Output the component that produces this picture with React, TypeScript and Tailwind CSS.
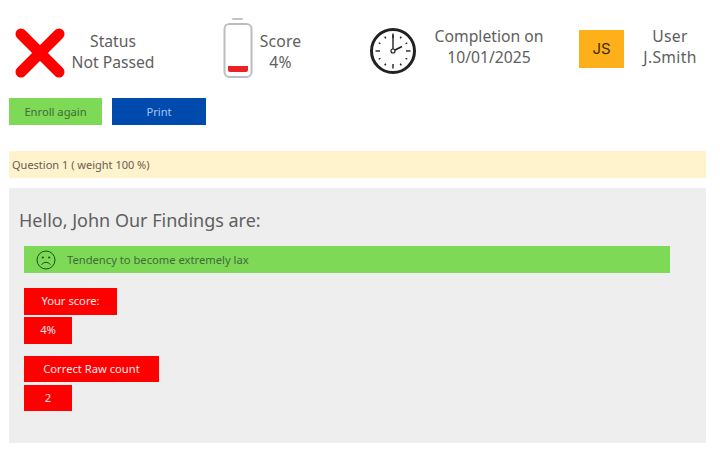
const font = { fontFamily: '"Noto Sans", sans-serif' };

function CrossIcon() {
  return (
    <svg width="50" height="50" viewBox="0 0 50 50" className="shrink-0">
      <path d="M6 6 L44 44 M44 6 L6 44" stroke="#ff0000" strokeWidth="11" strokeLinecap="round" />
    </svg>
  );
}

function BatteryIcon() {
  return (
    <svg width="30" height="60" viewBox="0 0 30 60" className="shrink-0">
      <path d="M10 1 H19" stroke="#c4c4c4" strokeWidth="2" strokeLinecap="round" />
      <rect x="1.5" y="6" width="27" height="53" rx="5" fill="#fff" stroke="#bdbdbd" strokeWidth="2" />
      <path d="M5 48 H25 V52 Q25 54 23 54 H7 Q5 54 5 52 Z" fill="#ed2024" />
    </svg>
  );
}

function ClockIcon() {
  const ticks = Array.from({ length: 12 }, (_, i) => i * 30);
  return (
    <svg width="48" height="48" viewBox="0 0 48 48" className="shrink-0">
      <circle cx="24" cy="24" r="21.5" fill="#fff" stroke="#222" strokeWidth="3" />
      {ticks.map((a) => (
        <line
          key={a}
          x1="24"
          y1={a % 90 === 0 ? 6.5 : 7.5}
          x2="24"
          y2={a % 90 === 0 ? 11 : 9.5}
          stroke="#222"
          strokeWidth="1.4"
          transform={`rotate(${a} 24 24)`}
        />
      ))}
      <line x1="24" y1="24" x2="24" y2="8" stroke="#222" strokeWidth="1.4" />
      <line x1="24" y1="24" x2="33" y2="19.5" stroke="#222" strokeWidth="1.7" />
      <circle cx="24" cy="24" r="2" fill="#fff" stroke="#222" strokeWidth="1.2" />
    </svg>
  );
}

function SadFace() {
  return (
    <svg width="20" height="20" viewBox="0 0 20 20" className="shrink-0">
      <circle cx="10" cy="10" r="9" fill="none" stroke="#1d4d1d" strokeWidth="1" />
      <circle cx="6.8" cy="7.5" r="1.1" fill="#1d4d1d" />
      <circle cx="13.2" cy="7.5" r="1.1" fill="#1d4d1d" />
      <path d="M5.5 14.5 Q10 10 14.5 14.5" fill="none" stroke="#1d4d1d" strokeWidth="1" />
    </svg>
  );
}

function RedBox({ w, text }: { w: string; text: string }) {
  return (
    <div className={`flex h-[26.5px] items-center justify-center bg-[#ff0000] pt-[1px] text-[11.2px] text-[#ffe9e9] ${w}`}>
      {text}
    </div>
  );
}

export default function App() {
  return (
    <div className="h-[465px] w-[720px] overflow-hidden bg-white text-[#606060]" style={font}>
      {/* header */}
      <div className="flex h-[98px] items-start">
        <div className="ml-[15px] mt-[28px]">
          <CrossIcon />
        </div>
        <div className="mt-[31px] w-[96px] text-center text-[15.7px] leading-[21px]">
          <div>Status</div>
          <div>Not Passed</div>
        </div>
        <div className="ml-[62px] mt-[18px]">
          <BatteryIcon />
        </div>
        <div className="mt-[31px] w-[55px] text-center text-[15.7px] leading-[21px] tracking-[0.2px]">
          <div>Score</div>
          <div>4%</div>
        </div>
        <div className="ml-[61px] mt-[27px]">
          <ClockIcon />
        </div>
        <div className="ml-[6px] mt-[26px] w-[132px] text-center text-[15.7px] leading-[21px]">
          <div>Completion on</div>
          <div>10/01/2025</div>
        </div>
        <div
          className="ml-[24px] mt-[30px] flex h-[38px] w-[45px] items-center justify-center bg-[#fdb019] text-[15px] text-[#3a2a05]"
          style={{ fontFamily: "Inter, sans-serif" }}
        >
          JS
        </div>
        <div className="mt-[26px] w-[92px] text-center text-[15.7px] leading-[21px] tracking-[0.3px]">
          <div>User</div>
          <div>J.Smith</div>
        </div>
      </div>

      {/* actions */}
      <div className="ml-[9px] flex gap-[10px] text-[11.2px]">
        <button className="h-[27px] w-[93px] bg-[#7ed957] pt-[1px] text-[#3f6b3a]">Enroll again</button>
        <button className="h-[27px] w-[94px] bg-[#004aad] pt-[1px] text-[#a3c6f5]">Print</button>
      </div>

      {/* question */}
      <div className="mx-[9px] mt-[26px] flex h-[27px] w-[697px] items-center bg-[#fff3cd] pl-[3px] pt-[1px] text-[11px] text-[#666050]">
        Question 1 ( weight 100 %)
      </div>

      {/* findings */}
      <div className="ml-[9px] mt-[10px] h-[255px] w-[697px] bg-[#eeeeee] pl-[15px] pt-[20px]">
        <div className="-ml-[5px] text-[18px] leading-[24px]">Hello, John Our Findings are:</div>
        <div className="mt-[14px] flex h-[27px] w-[646px] items-center gap-[11px] bg-[#7ed957] pl-[12px] text-[11.2px] text-[#3f6b3a]">
          <SadFace />
          <span className="pt-[1px]">Tendency to become extremely lax</span>
        </div>
        <div className="mt-[15px] flex flex-col gap-[2.5px]">
          <RedBox w="w-[93px]" text="Your score:" />
          <RedBox w="w-[48px]" text="4%" />
        </div>
        <div className="mt-[12px] flex flex-col gap-[2.5px]">
          <RedBox w="w-[135px]" text="Correct Raw count" />
          <RedBox w="w-[48px]" text="2" />
        </div>
      </div>
    </div>
  );
}
